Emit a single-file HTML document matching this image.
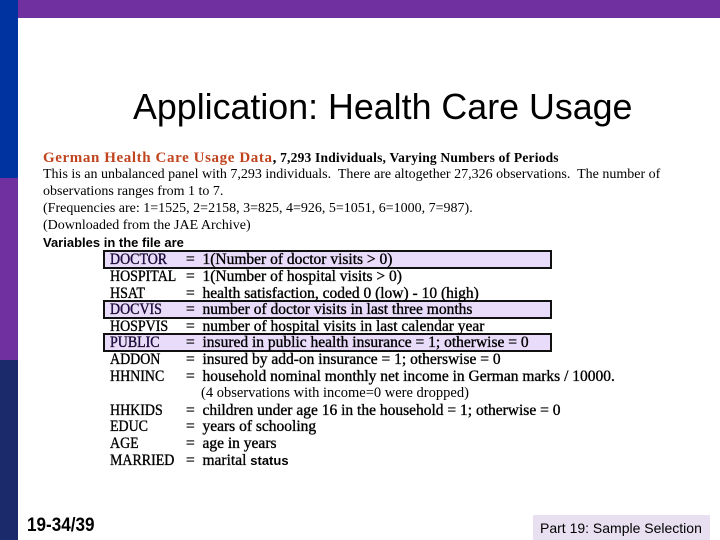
<!DOCTYPE html>
<html><head><meta charset="utf-8"><style>
body{margin:0;width:720px;height:540px;position:relative;background:#fff;overflow:hidden;font-family:"Liberation Serif",serif;color:#000}
.a{position:absolute;white-space:nowrap}
.t{font-size:14px;line-height:17px}
.v{font-size:15.5px;line-height:17px;transform:scaleX(1.0);transform-origin:left;-webkit-text-stroke:0.35px #000}
.box{position:absolute;left:103px;width:445px;background:#e9dcfa;border:2.5px solid #111;height:15px}
</style></head><body>
<div class="a" style="left:0;top:0;width:720px;height:18px;background:#7030a0"></div>
<div class="a" style="left:0;top:0;width:18px;height:178px;background:#0033a0"></div>
<div class="a" style="left:0;top:178px;width:18px;height:182px;background:#7030a0"></div>
<div class="a" style="left:0;top:360px;width:18px;height:180px;background:#1b2a6b"></div>
<div class="a" style="left:133px;top:86px;font-family:'Liberation Sans',sans-serif;font-size:35.8px;line-height:42px">Application: Health Care Usage</div>
<div class="a" style="left:43px;top:149px;font-weight:bold;font-size:15px;line-height:17px"><span style="color:#c0451f;letter-spacing:0.6px">German Health Care Usage Data</span>, <span style="font-size:13.5px;letter-spacing:0.2px">7,293 Individuals, Varying Numbers of Periods</span></div>
<div class="a t" style="left:43px;top:166px">This is an unbalanced panel with 7,293 individuals.&nbsp; There are altogether 27,326 observations.&nbsp; The number of</div>
<div class="a t" style="left:43px;top:183px">observations ranges from 1 to 7.</div>
<div class="a t" style="left:43px;top:200px">(Frequencies are: 1=1525, 2=2158, 3=825, 4=926, 5=1051, 6=1000, 7=987).</div>
<div class="a t" style="left:43px;top:217px">(Downloaded from the JAE Archive)</div>
<div class="a" style="left:43px;top:234px;font-family:'Liberation Sans',sans-serif;font-weight:bold;font-size:13px;line-height:17px">Variables in the file are</div>
<div class="box" style="top:250px"></div>
<div class="box" style="top:300px"></div>
<div class="box" style="top:333px"></div>
<div class="a v" style="left:110px;top:251px;color:#2a0a5a;transform:scaleX(0.9)">DOCTOR</div><div class="a v" style="left:186px;top:251px">=&nbsp; 1(Number of doctor visits &gt; 0)</div>
<div class="a v" style="left:110px;top:268px;transform:scaleX(0.9)">HOSPITAL</div><div class="a v" style="left:186px;top:268px">=&nbsp; 1(Number of hospital visits &gt; 0)</div>
<div class="a v" style="left:110px;top:285px;transform:scaleX(0.9)">HSAT</div><div class="a v" style="left:186px;top:285px">=&nbsp; health satisfaction, coded 0 (low) - 10 (high)</div>
<div class="a v" style="left:110px;top:301px;color:#2a0a5a;transform:scaleX(0.9)">DOCVIS</div><div class="a v" style="left:186px;top:301px">=&nbsp; number of doctor visits in last three months</div>
<div class="a v" style="left:110px;top:318px;transform:scaleX(0.9)">HOSPVIS</div><div class="a v" style="left:186px;top:318px">=&nbsp; number of hospital visits in last calendar year</div>
<div class="a v" style="left:110px;top:334px;color:#2a0a5a;transform:scaleX(0.9)">PUBLIC</div><div class="a v" style="left:186px;top:334px">=&nbsp; insured in public health insurance = 1; otherwise = 0</div>
<div class="a v" style="left:110px;top:351px;transform:scaleX(0.9)">ADDON</div><div class="a v" style="left:186px;top:351px">=&nbsp; insured by add-on insurance = 1; otherswise = 0</div>
<div class="a v" style="left:110px;top:368px;transform:scaleX(0.9)">HHNINC</div><div class="a v" style="left:186px;top:368px">=&nbsp; household nominal monthly net income in German marks / 10000.</div>
<div class="a v" style="left:201px;top:385px;-webkit-text-stroke:0;font-size:14.5px">(4 observations with income=0 were dropped)</div>
<div class="a v" style="left:110px;top:402px;transform:scaleX(0.9)">HHKIDS</div><div class="a v" style="left:186px;top:402px">=&nbsp; children under age 16 in the household = 1; otherwise = 0</div>
<div class="a v" style="left:110px;top:418px;transform:scaleX(0.9)">EDUC</div><div class="a v" style="left:186px;top:418px">=&nbsp; years of schooling</div>
<div class="a v" style="left:110px;top:435px;transform:scaleX(0.9)">AGE</div><div class="a v" style="left:186px;top:435px">=&nbsp; age in years</div>
<div class="a v" style="left:110px;top:452px;transform:scaleX(0.9)">MARRIED</div><div class="a v" style="left:186px;top:452px">=&nbsp; marital <span style="font-family:'Liberation Sans',sans-serif;font-weight:bold;font-size:13px;-webkit-text-stroke:0">status</span></div>
<div class="a" style="left:27px;top:515px;font-family:'Liberation Sans',sans-serif;font-weight:bold;font-size:19px;line-height:22px;transform:scaleX(0.9);transform-origin:left">19-34/39</div>
<div class="a" style="left:533px;top:515px;width:177px;height:25px;background:#e8e0f0"></div>
<div class="a" style="left:540px;top:519px;font-family:'Liberation Sans',sans-serif;font-size:14px;line-height:18px">Part 19: Sample Selection</div>
</body></html>
